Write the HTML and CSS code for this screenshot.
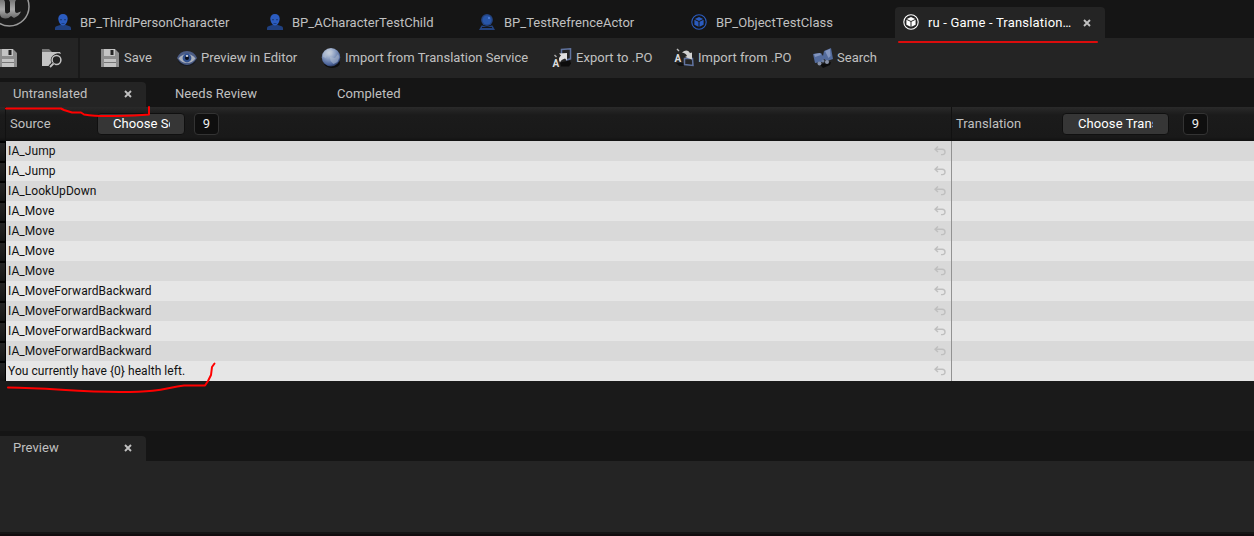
FILE: index.html
```html
<!DOCTYPE html>
<html lang="en">
<head>
<meta charset="utf-8">
<title>Translation Editor</title>
<link rel="stylesheet" href="styles.css">
</head>
<body>
<svg class="defs" width="0" height="0">
  <defs>
    <linearGradient id="metal" x1="0" y1="0" x2="0" y2="1"><stop offset="0" stop-color="#777"/><stop offset=".5" stop-color="#aaa"/><stop offset="1" stop-color="#666"/></linearGradient>
    <radialGradient id="globe" cx=".4" cy=".25" r=".8"><stop offset="0" stop-color="#d3d9e2"/><stop offset=".4" stop-color="#8fa2c4"/><stop offset=".8" stop-color="#4b6399"/><stop offset="1" stop-color="#1c2746"/></radialGradient>
    <symbol id="person" viewBox="0 0 16 16"><path d="M0 16v-2Q0 12.200 2 11.900L6 10.800h4l4 1.100q2 .3 2 2.100V16z" fill="#20407f"/><path d="M8 0c2.800 0 4.700 1.800 4.700 4.600 0 3.400-2.100 7-4.700 7S3.300 8 3.300 4.600C3.300 1.800 5.200 0 8 0z" fill="#2b5cc0"/><path d="M5 5.300h2v1H5zM9 5.300h2v1H9zM6.500 9h3v.7h-3z" fill="#183870"/></symbol>
    <symbol id="actor" viewBox="0 0 16 16"><path d="M2.500 11.500h11L16 16H0z" fill="#24437f"/><path d="M3 13.500h10" stroke="#151515"/><circle cx="8" cy="6.200" r="6.600" fill="#151515"/><circle cx="8" cy="6" r="5.900" fill="#24437f"/><circle cx="8" cy="6" r="4.500" fill="#2856a8"/><circle cx="10" cy="4" r="1" fill="#5584e0"/></symbol>
    <symbol id="cube" viewBox="0 0 16 16"><circle cx="8" cy="8" r="7.200" fill="none" stroke="currentColor" stroke-width="1.100"/><path d="M8 3l4.200 1.900L8 6.900 3.800 4.900zM3.400 5.700l4.100 2v5l-4.100-2zM12.600 5.700l-4.100 2v5l4.100-2z" fill="currentColor"/></symbol>
    <symbol id="disk" viewBox="0 0 18 18"><path d="M0 0h14l4 4v14H0z" fill="#8d8d8d"/><path d="M3 0h11v7H3zM3 10h12v8H3z" fill="#c4c4c4"/><path d="M9.500 1h3v5h-3z" fill="#222"/><path d="M3 13.500h12" stroke="#777"/></symbol>
    <symbol id="undo" viewBox="0 0 12 10"><path d="M4 .5L1 3.200 4 6M1.200 3.200H8.200Q11 3.200 11 6T8 8.600H7" fill="none" stroke="currentColor" stroke-width="1.400"/></symbol>
    <symbol id="close" viewBox="0 0 8 8"><path d="M1 1l6 6M7 1L1 7" stroke="#c0c0c0" stroke-width="1.900"/></symbol>
  </defs>
</svg>
<div class="window">
  <header class="titlebar">
    <svg class="logo" viewBox="0 0 30 27"><circle cx="9.500" cy="6.500" r="19.500" fill="#1b1b1b" stroke="#999" stroke-width="1.500"/><path d="M0 0h4q1 1 1 3v8q0 3 2.500 2.500L10 12V2L9 0h7q-1 1-1 3v8q0 2 2 2l4-1.500q-2 4.500-7 6.500l-3-2q-3 3-6 2.500Q0 18 0 14z" fill="url(#metal)"/></svg>
    <nav class="tabs">
      <div class="tab"><svg class="tab-icon"><use href="#person"/></svg><span>BP_ThirdPersonCharacter</span></div>
      <div class="tab"><svg class="tab-icon"><use href="#person"/></svg><span>BP_ACharacterTestChild</span></div>
      <div class="tab"><svg class="tab-icon"><use href="#actor"/></svg><span>BP_TestRefrenceActor</span></div>
      <div class="tab"><svg class="tab-icon blue"><use href="#cube"/></svg><span>BP_ObjectTestClass</span></div>
      <div class="tab active"><svg class="tab-icon"><use href="#cube"/></svg><span>ru - Game - Translation…</span><svg class="close"><use href="#close"/></svg></div>
    </nav>
  </header>
  <div class="toolbar">
    <div class="quick">
      <svg class="disk"><use href="#disk"/></svg>
      <svg class="browse" viewBox="0 0 21 20"><path d="M0 1h7l3 3H0z" fill="#777"/><path d="M0 4h18l1 2q-4-2-7 1t-1 7l-3 4H0z" fill="#c4c4c4"/><circle cx="14.500" cy="12" r="5.800" fill="#242424"/><circle cx="14.500" cy="12" r="4.400" fill="#242424" stroke="#c4c4c4" stroke-width="1.500"/><path d="M11.500 15.500L8 19" stroke="#242424" stroke-width="4"/><path d="M11.500 15.500L8 19" stroke="#c4c4c4" stroke-width="1.800"/></svg>
    </div>
    <button class="tool save"><svg class="disk"><use href="#disk"/></svg><span>Save</span></button>
    <button class="tool preview"><svg viewBox="0 0 20 20"><ellipse cx="10" cy="12" rx="9" ry="6" fill="#161920"/><path d="M0 10Q3 3 10 3t10 7q-4 7-10 7T0 10z" fill="#4b5c85"/><path d="M1.500 10.500Q5 6 10 6t8.500 4.500q-3.500 4.500-8.500 4.500T1.500 10.500z" fill="#a9afba"/><circle cx="10" cy="10" r="4.400" fill="#31518f"/><circle cx="10" cy="10" r="2" fill="#090d18"/><circle cx="10" cy="8" r="1" fill="#eee"/></svg><span>Preview in Editor</span></button>
    <button class="tool service"><svg viewBox="0 0 20 20"><ellipse cx="11" cy="15" rx="8" ry="5" fill="#0d0d0d"/><circle cx="10" cy="9.300" r="9.200" fill="url(#globe)"/><path d="M2 6Q4 2 8 2l4 1-2 3-4 1-1 3-3-1zM9 9l5 1 3-4 1.500 3-2 5-4 2-3-3z" fill="#b5c2d2" opacity=".5"/></svg><span>Import from Translation Service</span></button>
    <button class="tool export"><svg viewBox="0 0 20 20"><path d="M8 14.500l10-2 1 3-2 3H9z" fill="#0c0c0c"/><path d="M9.500 6V1.500l9-.7v10L14 12" fill="none" stroke="#60739f" stroke-width="1.500"/><path d="M7 5.500l8-.5v7.500l-2-2q-4 1-5 4-2.500-4.500 1-7z" fill="#e0e0e0"/><path d="M2.500 7l2 2" stroke="#aaa" stroke-width="1.500"/><text x=".5" y="18.500" class="glyph">A</text></svg><span>Export to .PO</span></button>
    <button class="tool import"><svg viewBox="0 0 20 20"><path d="M2 15h8v3H5z" fill="#101010"/><path d="M10.500 10.500h8l.5 7-8.500-1z" fill="none" stroke="#60739f" stroke-width="1.500"/><path d="M8 4.500q5-4 8 .5l2-.5v7l-7-2.500 2-1q-1-3-5-3.500z" fill="#d0d0d0"/><path d="M3 1l2 2" stroke="#bbb" stroke-width="1.500"/><text x=".5" y="13.500" class="glyph">A</text></svg><span>Import from .PO</span></button>
    <button class="tool search"><svg viewBox="0 0 20 20"><path d="M2 11l7 5 9-2-1 3-7 3z" fill="#0b0b0b"/><path d="M0 6l8-1 2 3 1-5 7-3 2 11-6 2-3-2-2 3-7 1z" fill="#536b9c"/><path d="M1 6l6-1 1 2-6 2zM12 3l5-2 .5 7-2 2z" fill="#8295be"/><circle cx="6.500" cy="15.500" r="2" fill="#8590a8"/><circle cx="14" cy="14" r="2" fill="#8a93a7"/><circle cx="10" cy="13" r="1.500" fill="#7080a0"/></svg><span>Search</span></button>
  </div>
  <nav class="panel-tabs">
    <div class="panel-tab active"><span>Untranslated</span><svg class="close"><use href="#close"/></svg></div>
    <div class="panel-tab review"><span>Needs Review</span></div>
    <div class="panel-tab completed"><span>Completed</span></div>
  </nav>
  <div class="columns">
    <div class="gutter"></div>
    <div class="column source"><span class="label">Source</span><button class="choose"><span>Choose So</span></button><span class="size">9</span></div>
    <div class="column translation"><span class="label">Translation</span><button class="choose"><span>Choose Trans</span></button><span class="size">9</span></div>
  </div>
  <main class="rows">
    <div class="row"><i></i><div><span>IA_Jump</span><svg><use href="#undo"/></svg></div><b></b></div>
    <div class="row"><i></i><div><span>IA_Jump</span><svg><use href="#undo"/></svg></div><b></b></div>
    <div class="row"><i></i><div><span>IA_LookUpDown</span><svg><use href="#undo"/></svg></div><b></b></div>
    <div class="row"><i></i><div><span>IA_Move</span><svg><use href="#undo"/></svg></div><b></b></div>
    <div class="row"><i></i><div><span>IA_Move</span><svg><use href="#undo"/></svg></div><b></b></div>
    <div class="row"><i></i><div><span>IA_Move</span><svg><use href="#undo"/></svg></div><b></b></div>
    <div class="row"><i></i><div><span>IA_Move</span><svg><use href="#undo"/></svg></div><b></b></div>
    <div class="row"><i></i><div><span>IA_MoveForwardBackward</span><svg><use href="#undo"/></svg></div><b></b></div>
    <div class="row"><i></i><div><span>IA_MoveForwardBackward</span><svg><use href="#undo"/></svg></div><b></b></div>
    <div class="row"><i></i><div><span>IA_MoveForwardBackward</span><svg><use href="#undo"/></svg></div><b></b></div>
    <div class="row"><i></i><div><span>IA_MoveForwardBackward</span><svg><use href="#undo"/></svg></div><b></b></div>
    <div class="row"><i></i><div><span>You currently have {0} health left.</span><svg><use href="#undo"/></svg></div><b></b></div>
  </main>
  <nav class="panel-tabs bottom">
    <div class="panel-tab active"><span>Preview</span><svg class="close"><use href="#close"/></svg></div>
  </nav>
  <section class="preview-pane"></section>
  <footer class="edge"></footer>
  <svg class="marks" viewBox="0 0 1254 536"><path d="M899 42H1097" stroke="#dc0c0c"/><path d="M6 108.500H61L64 110 72 112.500H81L84 114.500Q96 116.500 116 116T149 114.500V107"/><path d="M8 387.500C52 388 76 392 120 392S164 388 184 385.500H205L208 381 211 375 212 367 214.500 363.500"/></svg>
</div>
</body>
</html>
```
FILE: styles.css
```css
* { box-sizing: border-box; }
body { margin: 0; background: #151515; color: #c0c0c0; font: 13px/16px Roboto, "Liberation Sans", sans-serif; letter-spacing: .02px; white-space: nowrap; }
svg { display: block; flex: none; }
button { border: 0; padding: 0; background: none; color: inherit; font: inherit; letter-spacing: inherit; }
.defs { position: absolute; }
.window { position: relative; width: 1254px; height: 536px; overflow: hidden; display: flex; flex-direction: column; }
.window > * { flex: none; }
.titlebar { height: 38px; display: flex; }
.logo { width: 30px; height: 27px; margin-right: 17px; }
.tabs { display: flex; gap: 2px; padding-top: 7px; }
.tab { width: 210px; height: 31px; padding-left: 8px; display: flex; align-items: center; }
.tab-icon { width: 16px; height: 16px; margin-right: 9px; margin-top: -1px; }
.tab .blue { color: #2b5cc0; }
.tab.active { background: #242424; border-radius: 4px 4px 0 0; color: #fff; letter-spacing: .19px; }
.close { width: 8px; height: 8px; }
.tab .close { margin-left: auto; margin-right: 14px; }
.toolbar { height: 40px; background: #242424; display: flex; align-items: center; }
.quick { display: flex; align-items: center; width: 80px; height: 40px; border-right: 2px solid #191919; }
.disk { width: 18px; height: 18px; }
.quick .disk { margin-left: -1px; }
.browse { width: 21px; height: 20px; margin-left: 25px; }
.tool { display: flex; align-items: center; text-align: left; }
.tool svg { width: 20px; height: 20px; margin-right: 4px; }
.tool .disk { width: 18px; height: 18px; margin-right: 5px; }
.save { width: 76px; margin-left: 21px; }
.preview { width: 144px; }
.service { width: 231px; }
.export { width: 122px; }
.import { width: 139px; }
.glyph { font: bold 10px/10px Roboto, sans-serif; fill: #ddd; }
.panel-tabs { height: 29px; display: flex; padding-top: 4px; }
.panel-tab { height: 25px; padding-left: 13px; display: flex; align-items: center; letter-spacing: .06px; }
.panel-tab span { margin-top: -2px; }
.panel-tab.active { width: 146px; background: #242424; border-radius: 0 4px 0 0; }
.panel-tab .close { margin-left: auto; margin-right: 14px; margin-top: -2px; }
.review { width: 162px; padding-left: 29px; }
.completed { padding-left: 29px; }
.columns { height: 34px; display: flex; background: linear-gradient(#2a2a2a, #1b1b1b 8px, #191919 30px, #111); }
.gutter { width: 6px; border-right: 1px solid #111; }
.column { display: flex; align-items: center; padding-left: 4px; letter-spacing: .06px; }
.source { width: 945px; }
.translation { width: 303px; border-left: 1px solid #111; }
.label { width: 87px; }
.translation .label { width: 106px; }
.choose { width: 88px; height: 22px; padding: 0 14px 0 15px; background: #363636; border: 1px solid #101010; border-radius: 4px; color: #fff; text-align: left; }
.choose span { display: block; overflow: hidden; }
.translation .choose { width: 107px; padding-right: 15px; letter-spacing: .1px; }
.size { width: 25px; height: 22px; line-height: 20px; margin-left: 9px; border: 1px solid #333; border-radius: 4px; background: #0f0f0f; color: #eee; text-align: center; }
.translation .size { margin-left: 14px; }
.rows { height: 290px; background: #1a1a1a; }
.row { height: 20px; display: flex; background: #d9d9d9; color: #111; font-size: 12px; letter-spacing: .06px; }
.row:nth-child(even) { background: #e6e6e6; }
.row i { width: 6px; background: linear-gradient(#242424, #151515); border-top: 2px solid #000; border-right: 1px solid #000; }
.row div { width: 945px; padding: 0 5px 0 2px; display: flex; align-items: center; justify-content: space-between; }
.row svg { width: 12px; height: 10px; color: #bfbfbf; }
.row b { width: 303px; border-left: 1px solid #929292; }
.bottom { height: 30px; padding-top: 5px; }
.preview-pane { height: 71px; background: #242424; }
.edge { height: 4px; background: #120c0e; border-top: 2px solid #151515; }
.marks { position: absolute; left: 0; top: 0; width: 1254px; height: 536px; fill: none; stroke: #f00; stroke-width: 2; stroke-linejoin: round; stroke-linecap: round; pointer-events: none; }
```
